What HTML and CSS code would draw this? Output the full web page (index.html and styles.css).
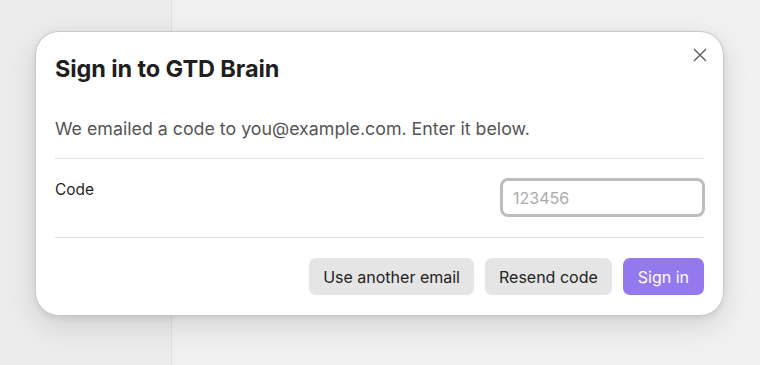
FILE: index.html
```html
<!DOCTYPE html>
<html>
<head>
<meta charset="utf-8">
<link rel="stylesheet" href="styles.css">
</head>
<body>
<div class="app">
  <aside class="sidebar"></aside>
  <main class="content"></main>
</div>
<div class="dialog">
  <div class="header">
    <h1 class="title">Sign in to GTD Brain</h1>
    <button class="close" aria-label="Close">
      <svg width="14" height="14" viewBox="0 0 14 14"><path d="M1 1L13 13M13 1L1 13" stroke="#666" stroke-width="1.5" fill="none"/></svg>
    </button>
  </div>
  <p class="desc">We emailed a code to you@example.com. Enter it below.</p>
  <div class="row">
    <label class="label">Code</label>
    <input class="input" placeholder="123456">
  </div>
  <div class="actions">
    <button class="btn">Use another email</button>
    <button class="btn">Resend code</button>
    <button class="btn primary">Sign in</button>
  </div>
</div>
</body>
</html>
```
FILE: styles.css
```css
html, body { margin: 0; padding: 0; }
body {
  width: 760px; height: 365px; overflow: hidden;
  font-family: Inter, "Liberation Sans", sans-serif;
  background: #f2f2f2;
  position: relative;
}
.app { display: flex; height: 365px; }
.sidebar { width: 171px; background: #ececec; border-right: 1px solid #dedede; }
.content { flex: 1; background: #f1f1f1; }
.dialog {
  position: absolute; left: 35px; top: 31px;
  width: 689px; height: 285px; box-sizing: border-box;
  background: #fff; border: 1px solid #c9c9c9; border-radius: 24px;
  box-shadow: 0 10px 30px rgba(0,0,0,0.12), 0 2px 6px rgba(0,0,0,0.08);
  padding: 0 19px 0 19px;
  display: flex; flex-direction: column;
}
.header { display: flex; justify-content: space-between; align-items: flex-start; }
.title { margin: 22px 0 0; font-size: 23.5px; font-weight: 700; color: #1f1f1f; letter-spacing: -0.1px; }
.close { border: 0; background: none; padding: 0; margin: 16px -3px 0 0; width: 14px; height: 14px; display: flex; }
.desc { margin: 35px 0 0; font-size: 17.8px; color: #555; padding-bottom: 19px; border-bottom: 1px solid #e2e2e2; }
.row { display: flex; justify-content: space-between; align-items: flex-start; padding: 19px 0 20px; border-bottom: 1px solid #e2e2e2; }
.label { font-size: 15.5px; color: #1f1f1f; margin-top: 2px; }
.input {
  width: 205px; height: 39px; box-sizing: border-box;
  border: 3px solid #bdbdbd; border-radius: 8px;
  padding: 0 10px; font-family: inherit; font-size: 16px; color: #222;
  outline: none; margin-right: -1px;
}
.input::placeholder { color: #aaa; }
.actions { display: flex; justify-content: flex-end; gap: 11px; margin-top: 20px; }
.btn {
  height: 37px; border: 0; border-radius: 7px; background: #e5e5e5;
  font-family: inherit; font-size: 16px; color: #222; padding: 0 14px;
}
.primary { background: #9478ee; color: #fff; padding: 0 15px; }
```
